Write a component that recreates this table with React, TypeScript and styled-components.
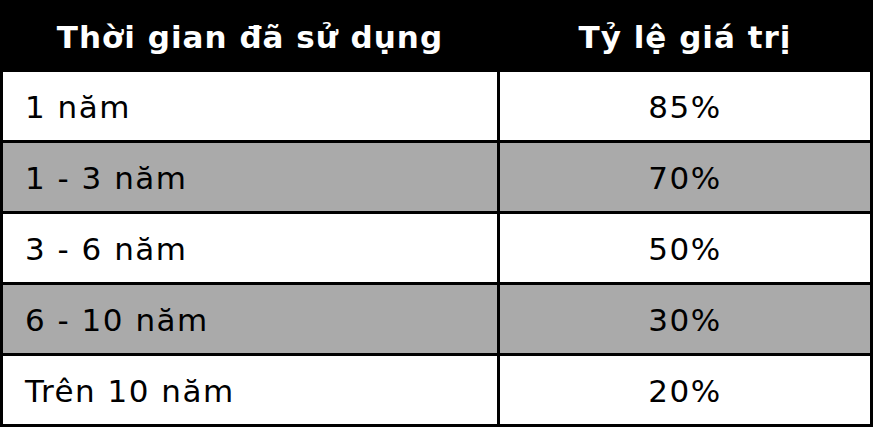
import React from "react";
import styled, { createGlobalStyle } from "styled-components";

const GlobalStyle = createGlobalStyle`
  html, body {
    margin: 0;
    padding: 0;
    background: #ffffff;
  }
  body {
    font-family: "DejaVu Sans", Verdana, sans-serif;
  }
`;

const Table = styled.div`
  display: grid;
  grid-template-columns: 494px 370px;
  grid-template-rows: 69px repeat(5, 68px);
  gap: 3px;
  width: 873px;
  box-sizing: border-box;
  padding: 0 3px 3px 3px;
  background: #000000;
`;

const HeadCell = styled.div`
  display: flex;
  align-items: center;
  justify-content: center;
  background: #000000;
  color: #ffffff;
  font-weight: bold;
  font-size: 31px;
  letter-spacing: 1px;
  padding-top: 4px;
`;

const Cell = styled.div<{ $shade: boolean; $align: "left" | "center" }>`
  display: flex;
  align-items: center;
  justify-content: ${(p) => (p.$align === "center" ? "center" : "flex-start")};
  padding-left: ${(p) => (p.$align === "center" ? "0" : "22px")};
  padding-top: 2px;
  background: ${(p) => (p.$shade ? "#aaaaaa" : "#ffffff")};
  color: #000000;
  font-size: 31px;
  letter-spacing: 1.5px;
`;

const rows = [
  ["1 năm", "85%"],
  ["1 - 3 năm", "70%"],
  ["3 - 6 năm", "50%"],
  ["6 - 10 năm", "30%"],
  ["Trên 10 năm", "20%"],
];

export default function App() {
  return (
    <>
      <GlobalStyle />
      <Table>
        <HeadCell>Thời gian đã sử dụng</HeadCell>
        <HeadCell>Tỷ lệ giá trị</HeadCell>
        {rows.map(([a, b], i) => (
          <React.Fragment key={a}>
            <Cell $shade={i % 2 === 1} $align="left">{a}</Cell>
            <Cell $shade={i % 2 === 1} $align="center">{b}</Cell>
          </React.Fragment>
        ))}
      </Table>
    </>
  );
}
